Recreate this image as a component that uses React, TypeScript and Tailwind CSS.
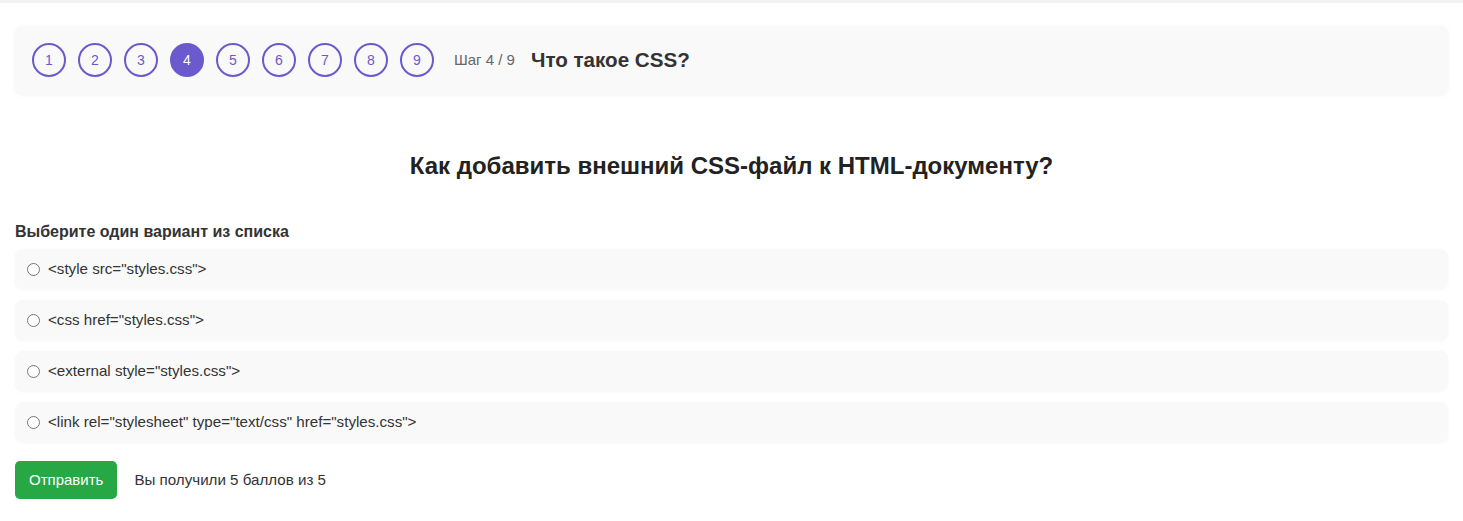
import React, { useState } from 'react';

const steps = [1, 2, 3, 4, 5, 6, 7, 8, 9];

const options = [
  '<style src="styles.css">',
  '<css href="styles.css">',
  '<external style="styles.css">',
  '<link rel="stylesheet" type="text/css" href="styles.css">',
];

const App: React.FC = () => {
  const [current] = useState(4);
  const [selected, setSelected] = useState<number | null>(null);

  return (
    <div className="min-h-screen bg-white font-['Liberation_Sans',Arial,sans-serif] text-[#333]">
      <div className="h-[3px] bg-[#f3f3f3]" />

      <div className="px-[15px] pt-[23px]">
        {/* Step navigation */}
        <div className="flex items-center rounded-lg bg-[#f9f9f9] py-[17px] pl-[17px] shadow-[0_1px_4px_rgba(0,0,0,0.06)]">
          <div className="flex gap-3">
            {steps.map((n) => (
              <button
                key={n}
                className={
                  n === current
                    ? 'flex h-[34px] w-[34px] items-center justify-center rounded-full border-2 border-[#6a5acd] bg-[#6a5acd] text-sm text-white'
                    : 'flex h-[34px] w-[34px] items-center justify-center rounded-full border-2 border-[#6a5acd] bg-transparent text-sm text-[#6a5acd]'
                }
              >
                {n}
              </button>
            ))}
          </div>
          <span className="ml-5 text-[15px] text-[#666]">Шаг {current} / 9</span>
          <span className="ml-4 text-[20.6px] font-bold text-[#333]">Что такое CSS?</span>
        </div>

        {/* Question */}
        <h2 className="mt-[57px] text-center text-2xl leading-[29px] font-bold text-[#222]">
          Как добавить внешний CSS-файл к HTML-документу?
        </h2>

        <p className="mt-[42px] text-base leading-5 font-bold text-[#333]">Выберите один вариант из списка</p>

        <div className="mt-[7px] flex flex-col gap-[11px]">
          {options.map((opt, i) => (
            <label
              key={i}
              className="flex h-10 cursor-pointer items-center gap-2 rounded-lg bg-[#f9f9f9] pl-3 text-[15.15px] text-[#333] shadow-[0_1px_3px_rgba(0,0,0,0.04)]"
            >
              <input
                type="radio"
                name="answer"
                className="m-0 h-[13px] w-[13px]"
                checked={selected === i}
                onChange={() => setSelected(i)}
              />
              <span>{opt}</span>
            </label>
          ))}
        </div>

        <div className="mt-[19px] flex items-center gap-[17px]">
          <button className="h-[38px] rounded-[5px] bg-[#28a745] px-[14px] text-[15px] text-white">Отправить</button>
          <span className="text-[15.15px] text-[#333]">Вы получили 5 баллов из 5</span>
        </div>
      </div>
    </div>
  );
};

export default App;
